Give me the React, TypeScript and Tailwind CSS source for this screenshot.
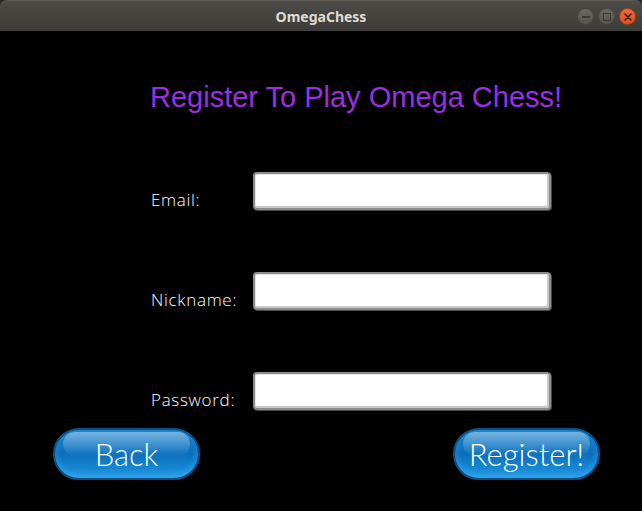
import React from "react";

type FieldRowProps = { label: string; className?: string };

function FieldRow({ label, className = "" }: FieldRowProps) {
  return (
    <div className={`flex items-end ${className}`}>
      <span className="w-[102px] text-[17px] leading-[20px] font-light tracking-[0.7px] text-white font-['Open_Sans','Lato',sans-serif]">
        {label}
      </span>
      <div className="h-[38px] w-[298px] rounded-[4px] border-2 border-[#8c8c8c] bg-white shadow-[inset_1px_1px_0_#e4e4e4,inset_-2px_-2px_0_#c9c9c9,1px_1px_0_#4a4a4a]" />
    </div>
  );
}

function GlossyButton({ children }: { children: React.ReactNode }) {
  return (
    <button
      type="button"
      className="relative flex h-[52px] w-[147px] items-center justify-center overflow-hidden rounded-full border-2 border-[#0b5283] bg-gradient-to-b from-[#1a82cc] via-[#0a6fbd] to-[#2098e0] shadow-[inset_0_-3px_6px_rgba(80,180,255,0.45)]"
    >
      {/* gloss highlight */}
      <span className="absolute left-[8px] right-[8px] top-[2px] h-[24px] rounded-full bg-gradient-to-b from-white/40 to-white/0" />
      <span className="relative text-[31px] leading-none font-light text-white font-['Lato','Open_Sans',sans-serif]">
        {children}
      </span>
    </button>
  );
}

export default function App() {
  return (
    <div className="flex h-[511px] w-[642px] flex-col overflow-hidden bg-[#2a2a28]">
      {/* title bar */}
      <div className="relative flex h-[31px] items-center justify-center rounded-t-[7px] border-t border-[#5a5953] bg-gradient-to-b from-[#4d4c47] to-[#3c3b37]">
        <span className="text-[14px] font-bold text-[#dfdbd2] font-['Noto_Sans','DejaVu_Sans',sans-serif]">
          OmegaChess
        </span>
        <div className="absolute right-[6px] top-[7px] flex gap-[4px]">
          <span className="flex h-[17px] w-[17px] items-center justify-center rounded-full border border-[#46453f] bg-gradient-to-b from-[#6a6964] to-[#55544f]">
            <span className="h-[2px] w-[8px] bg-[#3a3935]" />
          </span>
          <span className="flex h-[17px] w-[17px] items-center justify-center rounded-full border border-[#46453f] bg-gradient-to-b from-[#6a6964] to-[#55544f]">
            <span className="h-[8px] w-[8px] border-[1.5px] border-[#3a3935]" />
          </span>
          <span className="flex h-[17px] w-[17px] items-center justify-center rounded-full border border-[#a8401a] bg-gradient-to-b from-[#f06a38] to-[#df4e1b]">
            <svg width="8" height="8" viewBox="0 0 8 8">
              <path d="M1 1 L7 7 M7 1 L1 7" stroke="#3b1608" strokeWidth="1.5" strokeLinecap="round" />
            </svg>
          </span>
        </div>
      </div>

      {/* content */}
      <div className="flex flex-1 flex-col bg-black">
        <h1 className="ml-[150px] mt-[50px] text-[29px] leading-[32px] text-[#9a2fe2] font-['Liberation_Sans',Arial,sans-serif]">
          Register To Play Omega Chess!
        </h1>

        <div className="ml-[151px] mt-[59px] flex flex-col gap-[62px]">
          <FieldRow label="Email:" />
          <FieldRow label="Nickname:" />
          <FieldRow label="Password:" />
        </div>

        <div className="ml-[53px] mt-[18px] flex w-[547px] justify-between">
          <GlossyButton>Back</GlossyButton>
          <GlossyButton>Register!</GlossyButton>
        </div>
      </div>
    </div>
  );
}
